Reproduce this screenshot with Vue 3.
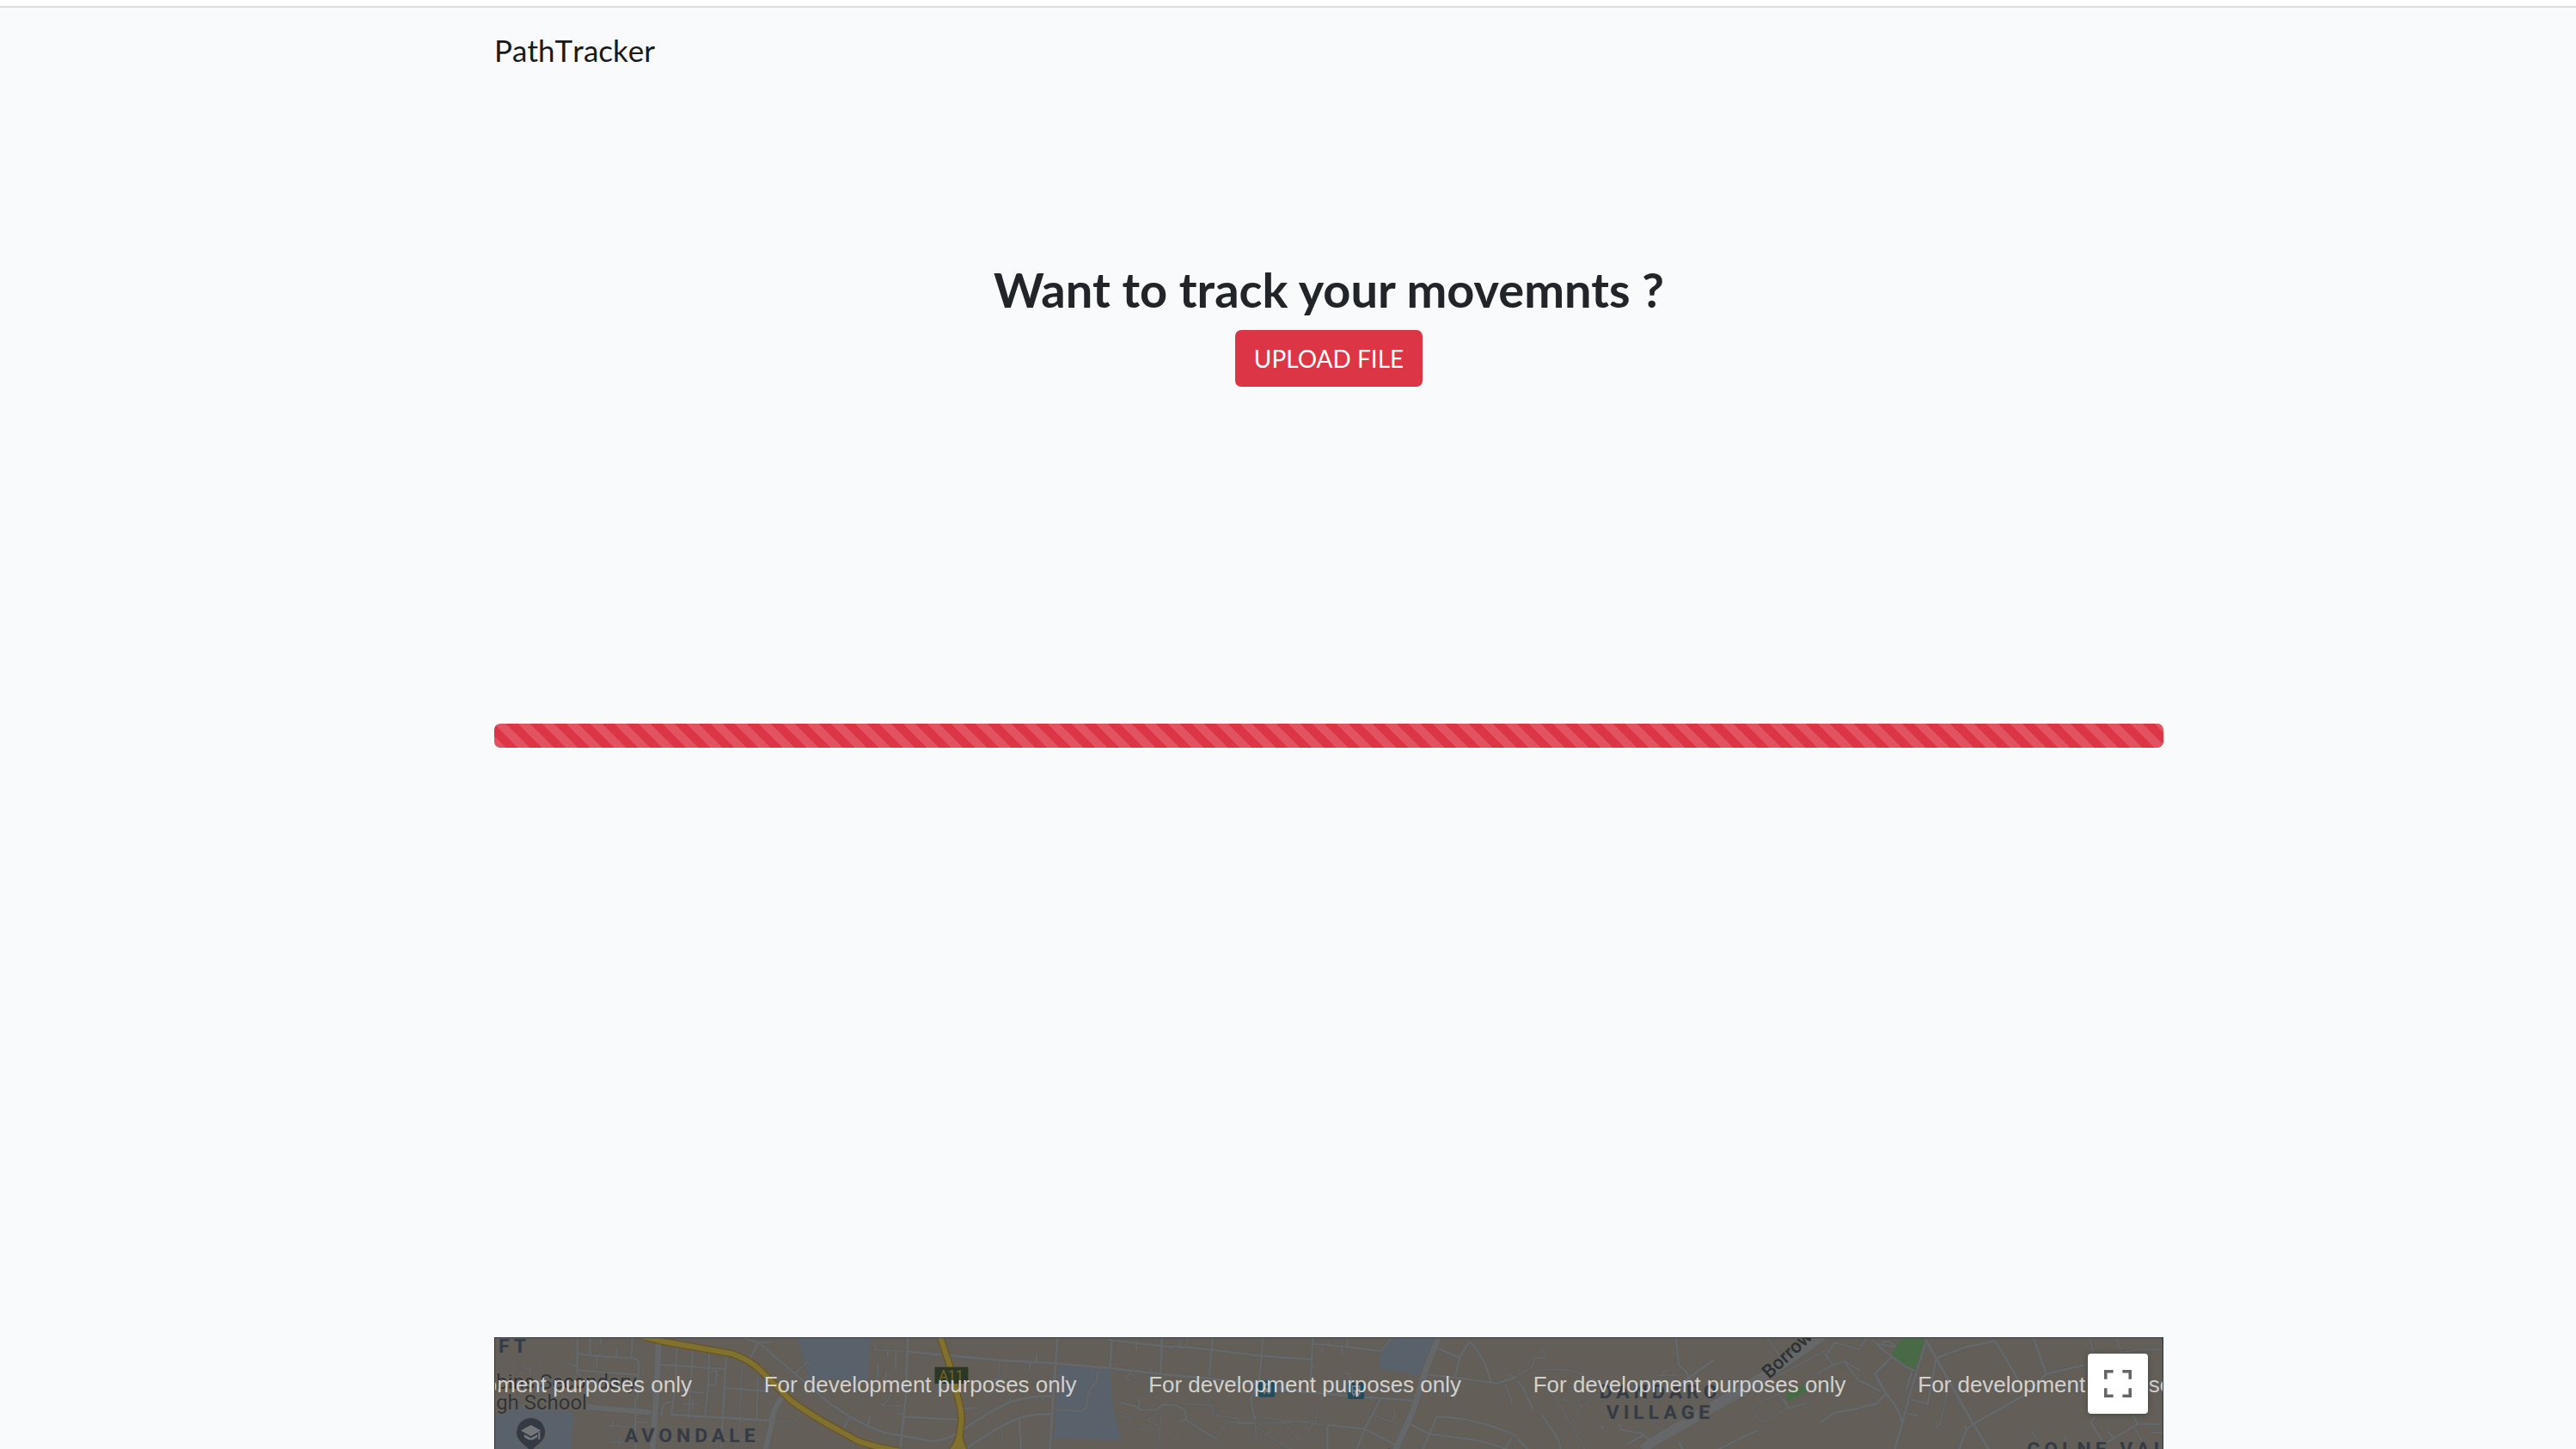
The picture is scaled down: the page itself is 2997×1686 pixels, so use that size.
<script setup>
const watermark = 'For development purposes only'
const watermarkStarts = [-135, 313, 761, 1209, 1657]

// Street geometry per map tile; each road is [path, width] in tile units (3 per pixel).
const tiles = [
  [
    ['M318 30V85L316 150L332 168', 8],
    ['M318 85L420 95L510 100Q530 103 532 115L528 245', 8],
    ['M362 30V85', 7], ['M400 30V52', 7], ['M455 65V95', 7], ['M510 30L505 98', 7],
    ['M385 97V128', 7], ['M318 142L420 150L530 158', 8], ['M288 120L318 128', 7],
    ['M602 30L598 130L590 280L580 420', 22], ['M350 270L575 290', 20],
    ['M600 122L835 138', 8], ['M665 60L660 200L645 300', 7], ['M720 75L712 220L705 310', 7],
    ['M778 80L775 200L762 310', 7], ['M838 95L830 220L820 420', 8], ['M893 120L880 420', 4],
    ['M948 170L945 310', 6], ['M655 210L760 222', 7], ['M835 205L985 215', 8],
    ['M645 297L990 318', 10], ['M780 145H805L800 195H775', 7], ['M610 300L618 260L645 252', 8],
    ['M685 262L742 260', 6], ['M720 240V285', 6], ['M1045 225Q1000 270 998 320L975 420', 20],
    ['M440 318V345', 6], ['M420 335L520 340', 5], ['M520 240V420', 7], ['M520 325H560', 6],
    ['M950 45L920 105', 10], ['M900 30L950 45L1200 258', 8], ['M950 45H1000', 8],
    ['M1112 110L1132 122M1120 115L1075 155', 6], ['M1095 280L1085 320L1000 322M1067 325V360', 3],
    ['M432 392L480 396M462 375V410', 5], ['M690 360L760 378L900 385', 5], ['M640 385H960', 5],
    ['M235 35L225 70M100 100L90 160M180 100L190 150M40 100L70 105', 3], ['M120 130L155 140L150 160', 5]
  ],
  [
    ['M140 70L272 77', 4], ['M272 30L265 240L245 420', 10], ['M272 77L410 90L592 107L790 118L975 135L1200 160', 10],
    ['M152 45L160 70', 6], ['M203 75V100M230 75V140M168 115V170M198 145L190 200', 7],
    ['M215 225L200 250L182 265L250 267', 5], ['M235 295H258M258 305L450 315', 8],
    ['M0 258L70 305Q130 340 190 360L330 385Q380 400 450 360Q580 270 640 250Q700 232 780 232', 9],
    ['M70 305L45 348M140 302L132 335', 7], ['M470 275H505', 7],
    ['M470 420Q600 330 660 310Q700 295 778 295', 9], ['M662 315L668 420', 8], ['M598 350L604 392', 4],
    ['M592 107L588 180M565 175H610', 5], ['M722 85V112M698 115V140', 7], ['M630 240V256M744 235V252', 6],
    ['M795 30L780 240L768 420', 10], ['M985 40L978 135', 9], ['M970 36L1200 62', 8],
    ['M1070 36V70', 7], ['M1160 30L1155 155', 9], ['M1120 130V150M1075 172L1050 152L1035 165L1045 180', 5],
    ['M1015 255L1070 270L1085 282L1140 280L1165 262L1200 265M1080 240V282', 7],
    ['M990 285L1010 302L1050 305M1055 290V345L1150 350', 3], ['M1160 280L1145 420M1145 295L1108 315L1145 335', 4],
    ['M80 390V420', 3]
  ],
  [
    ['M0 58L130 70L305 92L480 104', 8], ['M138 30L125 165', 8], ['M313 30L300 180L270 245L285 320', 7],
    ['M50 30L45 62M25 40V60', 6], ['M487 30L478 205M478 130H492', 8], ['M487 50L620 62L725 75L760 33', 8],
    ['M541 40V54M520 60V78M590 66V88M607 30V60', 7], ['M0 160L120 170L350 200L500 220L700 238L835 248', 9],
    ['M360 210L700 242', 7], ['M602 150L615 155L625 190', 8],
    ['M925 30L880 145L835 290L775 420', 22], ['M925 65L950 78L1000 98L1035 40', 9],
    ['M1035 40Q1090 100 1110 185M1000 98L985 165', 8], ['M890 158L1000 170L1130 188L1200 165', 9],
    ['M1175 152L1190 175M1160 190L1185 260', 6], ['M947 200V245', 4],
    ['M722 245L670 345L640 420', 8], ['M700 298L760 322L775 300L770 280', 5],
    ['M538 333L668 348L720 375L790 410', 8], ['M538 333V420', 9], ['M507 260L498 325L470 350L510 390', 4],
    ['M45 258L75 262L130 265L140 300L225 310L230 330L500 320', 4], ['M108 230L135 265L150 300M148 205V232', 3],
    ['M0 262L40 280L45 315L22 320M45 315L90 345L150 382', 7], ['M150 382L185 325H280', 4],
    ['M285 320L290 390L275 410M290 340L360 390L420 420M375 315L450 392M285 305L540 335M300 380L360 345', 4],
    ['M25 352L0 382', 4], ['M825 330L895 365L970 375Q1080 385 1170 420', 8],
    ['M895 365L920 305Q1050 305 1200 372M870 420L895 365', 8], ['M988 280V305', 3], ['M1180 380L1160 420M705 365H715', 7]
  ],
  [
    ['M0 160L55 130L62 100L100 98Q105 75 85 75', 5], ['M0 178L20 200L55 278', 8],
    ['M70 145Q180 125 260 170L300 195', 4], ['M70 160L130 230L240 420', 4],
    ['M88 298L140 375L155 420M0 380L40 420', 8], ['M155 240L225 268L285 225M225 268L205 290M180 200L260 230', 4],
    ['M556 30L565 125L590 145L605 175', 8], ['M530 220L605 165L690 105', 9], ['M490 160H565M510 160V145L530 142', 5],
    ['M875 30L925 100', 6], ['M440 420L470 395L850 170Q980 90 1075 15', 34], ['M500 395L870 185L1085 70', 5],
    ['M355 330L365 350L440 365L470 395M385 400L440 370', 8], ['M420 325L440 362M480 330L510 355M520 300L545 335', 4],
    ['M295 335L302 347', 9], ['M565 390L580 420M700 420L840 352', 8],
    ['M820 270L845 315L865 320L945 275L915 225L820 270', 4], ['M950 275L1015 255M955 280L930 240', 6],
    ['M1060 325L1110 290L1200 275', 8], ['M1050 155L1100 125L1145 110L1200 145M1075 85L1110 130M1080 90L1110 45L1200 70M1145 115L1200 185', 7]
  ],
  [
    ['M0 60L25 30M40 35L60 50L120 60M75 45L100 40L125 60', 7], ['M55 50L110 95L155 128L190 145', 8],
    ['M110 95L50 155L90 225Q145 285 145 335L120 420', 10], ['M0 180L70 215M0 272L55 260L90 225', 9],
    ['M230 40L185 185L140 350L120 420', 9], ['M228 35L265 100L395 330L450 420', 11],
    ['M265 100L365 62L470 40L505 95L560 190', 9], ['M470 130L510 105', 3], ['M265 100L250 180L235 260L180 245M160 215L180 145', 8],
    ['M305 215L280 325L260 348M262 325L285 335', 5], ['M165 295L200 300', 8],
    ['M605 30L650 155L800 120', 9], ['M395 330L580 225L650 155', 9], ['M345 420L370 350L395 330M365 335L370 350', 9],
    ['M800 30L825 110M895 30L910 80L975 70H1055', 6], ['M820 305L805 325L850 395M860 395L970 330H1055M950 290L970 335M865 355L890 385', 8],
    ['M960 345L1000 420M1015 360H1055M598 355L615 385M710 365L725 410', 6]
  ]
]

const highway = [
  'M545 24L620 42L860 85Q920 105 960 145L1050 235Q1080 265 1200 335L1290 385Q1330 405 1445 425',
  'M1585 25L1620 130L1650 250Q1665 300 1655 350L1645 430',
  'M1655 360Q1645 405 1620 430M1650 365Q1655 395 1672 430'
]
</script>

<template>
  <div class="page">
    <div class="topbar"></div>
    <div class="container">
      <nav class="navbar"><a class="brand" href="#">PathTracker</a></nav>

      <main>
        <section class="hero">
          <h2>Want to track your movemnts ?</h2>
          <button class="upload" type="button">UPLOAD FILE</button>
        </section>

        <div class="progress" role="progressbar" aria-label="Upload progress" aria-valuenow="100"></div>

        <section class="map" aria-label="Map">
          <svg class="canvas" viewBox="0 0 1942 130" preserveAspectRatio="xMinYMin slice">
            <g transform="translate(-10 -10) scale(0.333333)">
              <g class="area">
                <path d="M30 300L90 262L305 290L295 420H30Z" />
                <path d="M1085 30H1342L1332 176L1180 178L1120 170L1100 75Z" />
                <path d="M1998 125L2178 140L2190 280L2220 388L1982 378Z" />
                <path d="M3165 30H3312L3260 160L3120 136L3125 85Z" />
              </g>
              <g class="park">
                <path d="M4945 30H5025L4993 143L4955 130L4908 85Z" />
                <path d="M4535 222L4600 192L4615 215L4550 252Z" />
              </g>
              <g v-for="(roads, i) in tiles" :key="i" :transform="`translate(${i * 1200} 0)`">
                <path v-for="(road, j) in roads" :key="'edge' + j" class="edge" :d="road[0]" :stroke-width="road[1] + 3" />
                <path v-for="(road, j) in roads" :key="'road' + j" class="road" :d="road[0]" :stroke-width="road[1]" />
              </g>
              <path class="trail" d="M2138 145L2130 185Q2100 210 2100 250Q2095 285 2070 285L1985 280" />
              <path v-for="d in highway" :key="'e' + d" class="highway-edge" :d="d" />
              <path v-for="d in highway" :key="d" class="highway" :d="d" />
              <rect class="shield" x="1566" y="131" width="117" height="58" />
              <g>
                <path class="pin" d="M155 308C126 308 104 331 104 360C104 392 135 402 153 425H157C175 402 206 392 206 360C206 331 184 308 155 308Z" />
                <path class="cap" d="M120 353L155 333L190 353L155 373ZM132 366L155 379L178 366V376Q155 395 132 376ZM181 358H187V384H181Z" />
              </g>
              <g v-for="p in [[2697, 178], [3009, 185]]" :key="p[0]" :transform="`translate(${p[0]} ${p[1]})`">
                <rect class="stop" width="58" height="58" rx="8" />
                <path class="bus" d="M14 10H44V42H40V48H34V42H24V48H18V42H14ZM19 16V27H39V16ZM19 32V37H24V32ZM34 32V37H39V32Z" />
              </g>
            </g>
            <g class="area-label">
              <text x="4" y="17">FT</text>
              <text x="151" y="121">AVONDALE</text>
              <text x="190" y="145">WEST</text>
              <text x="1286" y="70">DANDARO</text>
              <text x="1294" y="94">VILLAGE</text>
              <text x="1784" y="137">COLNE VALLEY</text>
            </g>
            <g class="place-label">
              <text x="165" y="59" text-anchor="end">Robbins Secondary</text>
              <text x="107" y="83" text-anchor="end">High School</text>
            </g>
            <text class="shield-label" x="517" y="49">A11</text>
            <text class="street-label" transform="translate(1484 48) rotate(-43)">Borrowdale Rd</text>
            <text class="street-label" transform="translate(1041 127) rotate(115)">Rd</text>
            <text v-for="x in watermarkStarts" :key="x" class="watermark" :x="x" y="63">{{ watermark }}</text>
          </svg>
          <button class="fullscreen" type="button" aria-label="Toggle fullscreen view">
            <svg viewBox="0 0 18 18" width="32" height="32">
              <path d="M0 0v6h2V2h4V0H0zm16 0h-4v2h4v4h2V0h-2zm0 16h-4v2h6v-6h-2v4zM2 12H0v6h6v-2H2v-4z" />
            </svg>
          </button>
        </section>
      </main>
    </div>
  </div>
</template>

<style>
body {
  margin: 0;
  background: #f8fafc;
}
</style>

<style scoped>
.page {
  color: #212529;
  font-family: Lato, "Open Sans", sans-serif;
}
.topbar {
  height: 7px;
  background: #fff;
  border-bottom: 2px solid #d9dce0;
}
.container {
  max-width: 1942px;
  margin: 0 auto;
  padding-left: 95px;
}
.navbar {
  padding: 23px 0 25px;
}
.brand {
  display: inline-block;
  color: #191919;
  font-size: 35px;
  font-kerning: none;
  line-height: 52px;
  text-decoration: none;
}
.hero {
  display: flex;
  flex-direction: column;
  align-items: center;
  gap: 14px;
  padding-top: 194px;
}
h2 {
  margin: 0;
  font-size: 56px;
  font-weight: 700;
  line-height: 67px;
}
.upload {
  padding: 12px 22px;
  border: 0;
  border-radius: 7px;
  background: #dc3545;
  color: #fff;
  font: 28px/42px Lato, sans-serif;
}
.progress {
  height: 28px;
  margin-top: 392px;
  border-radius: 7px;
  background: #dc3545 linear-gradient(45deg, rgba(255, 255, 255, 0.15) 25%, transparent 25%, transparent 50%, rgba(255, 255, 255, 0.15) 50%, rgba(255, 255, 255, 0.15) 75%, transparent 75%) 0 0 / 28px 28px;
}
.map {
  position: relative;
  height: 129px;
  margin-top: 686px;
  overflow: hidden;
  border: 1px solid #2e3236;
  border-bottom: 0;
  background: #635f58;
}
.canvas {
  display: block;
  width: 100%;
  height: 100%;
}
.canvas path {
  stroke-linejoin: round;
}
.area { fill: #59626a; }
.park { fill: #486b46; }
.edge { fill: none; stroke: #5a5a5b; }
.road { fill: none; stroke: #666768; }
.trail { fill: none; stroke: #696762; stroke-width: 5; }
.highway-edge { fill: none; stroke: #695425; stroke-width: 26; }
.highway { fill: none; stroke: #81712f; stroke-width: 18; }
.shield { fill: #2c3826; }
.pin { fill: #343a44; stroke: #656057; stroke-width: 3; }
.cap { fill: #74777a; }
.stop { fill: #234b5c; }
.bus { fill: #6f7b82; fill-rule: evenodd; }
.area-label {
  fill: #363b43;
  stroke: #615f5b;
  stroke-width: 3px;
  paint-order: stroke;
  font: 700 23px Roboto, sans-serif;
  letter-spacing: 5px;
}
.place-label {
  fill: #303439;
  stroke: #66635d;
  stroke-width: 3px;
  paint-order: stroke;
  font: 24px Roboto, sans-serif;
}
.shield-label {
  fill: #776328;
  font: 16px Roboto, sans-serif;
}
.street-label {
  fill: #2d3033;
  font: 500 22px Roboto, sans-serif;
}
.watermark {
  fill: #d2d1cf;
  font: 26px "Liberation Sans", Arial, sans-serif;
}
.fullscreen {
  position: absolute;
  top: 18px;
  right: 17px;
  display: grid;
  place-items: center;
  width: 70px;
  height: 70px;
  padding: 0;
  border: 0;
  border-radius: 4px;
  background: #fff;
  box-shadow: 0 1px 6px rgba(0, 0, 0, 0.3);
}
.fullscreen path {
  fill: #666;
}
</style>
